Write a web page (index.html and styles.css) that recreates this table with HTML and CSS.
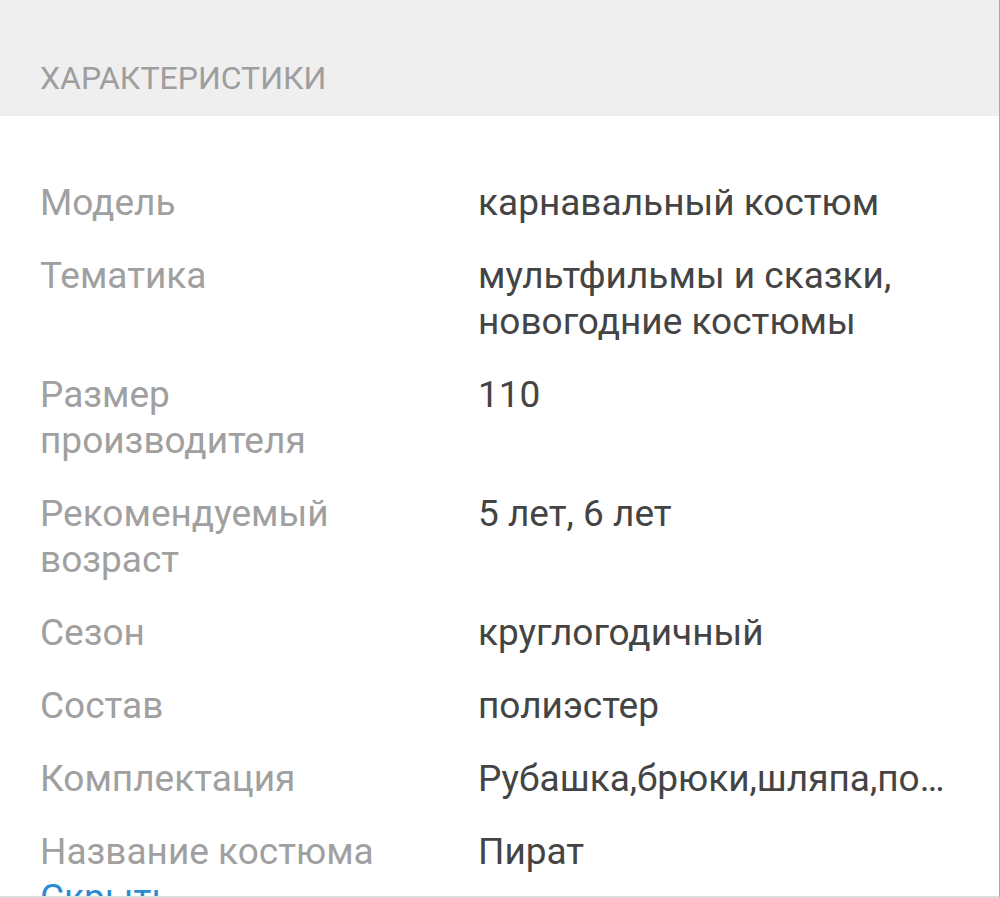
FILE: index.html
```html
<!DOCTYPE html>
<html lang="ru">
<head>
<meta charset="utf-8">
<link rel="stylesheet" href="styles.css">
</head>
<body>
<div class="page">
  <div class="header">ХАРАКТЕРИСТИКИ</div>
  <div class="specs">
    <div class="row"><div class="label">Модель</div><div class="value">карнавальный костюм</div></div>
    <div class="row"><div class="label">Тематика</div><div class="value">мультфильмы и сказки, новогодние костюмы</div></div>
    <div class="row"><div class="label">Размер производителя</div><div class="value">110</div></div>
    <div class="row"><div class="label">Рекомендуемый возраст</div><div class="value">5 лет, 6 лет</div></div>
    <div class="row"><div class="label">Сезон</div><div class="value">круглогодичный</div></div>
    <div class="row"><div class="label">Состав</div><div class="value">полиэстер</div></div>
    <div class="row"><div class="label">Комплектация</div><div class="value nowrap">Рубашка,брюки,шляпа,по…</div></div>
    <div class="row"><div class="label">Название костюма</div><div class="value">Пират</div></div>
  </div>
  <div class="toggle">Скрыть</div>
</div>
</body>
</html>
```
FILE: styles.css
```css
html, body {
  margin: 0;
  padding: 0;
  background: #ffffff;
}
body {
  font-family: Roboto, "Noto Sans", sans-serif;
}
.page {
  box-sizing: border-box;
  width: 1000px;
  height: 898px;
  overflow: hidden;
  border-right: 1px solid #a8a8a8;
  border-bottom: 2px solid #dcdcdc;
  background: #fff;
}
.header {
  box-sizing: border-box;
  height: 116px;
  background: #efefef;
  padding: 58px 0 0 40px;
  font-size: 32px;
  line-height: 40px;
  color: #9e9e9e;
}
.specs {
  display: flex;
  flex-direction: column;
  gap: 27px;
  padding: 64px 40px 0 40px;
}
.row {
  display: grid;
  grid-template-columns: 438px minmax(0, 1fr);
  font-size: 37px;
  line-height: 46px;
}
.label {
  color: #a0a0a0;
  padding-right: 60px;
}
.value {
  color: #444444;
}
.nowrap {
  white-space: nowrap;
}
.toggle {
  padding-left: 40px;
  font-size: 37px;
  line-height: 46px;
  color: #2b8ad4;
}
```
